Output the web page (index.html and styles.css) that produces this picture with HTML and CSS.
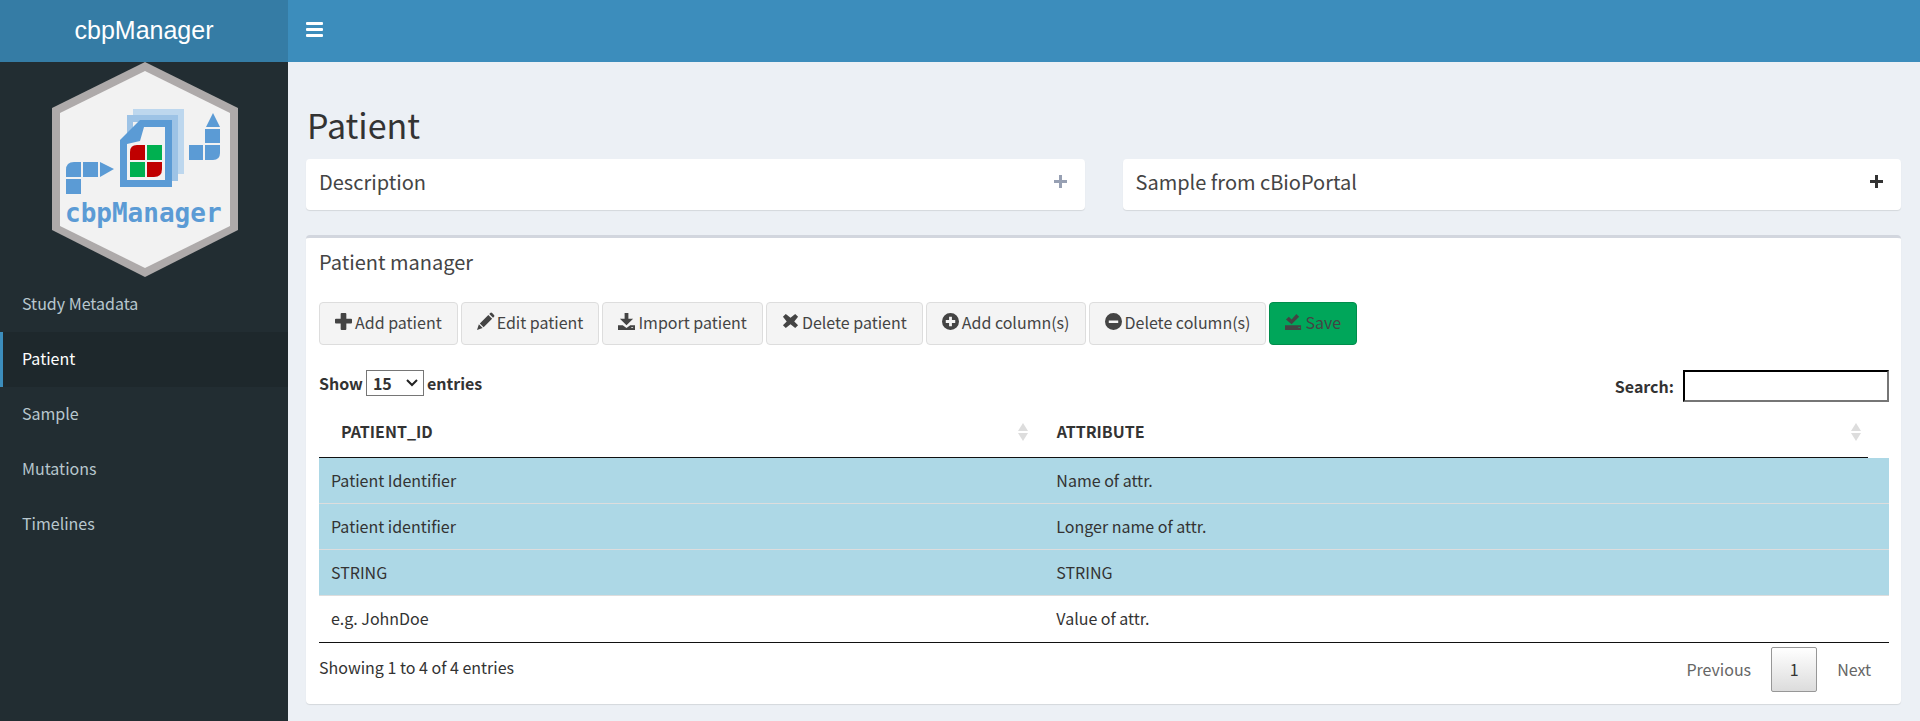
FILE: index.html
```html
<!DOCTYPE html>
<html lang="en">
<head>
<meta charset="utf-8">
<title>cbpManager</title>
<link rel="stylesheet" href="styles.css">
</head>
<body>
<header class="main-header">
  <a class="brand" href="#">cbpManager</a>
  <nav class="navbar">
    <button class="sidebar-toggle" type="button" aria-label="Toggle navigation">
      <svg width="17" height="16" viewBox="0 0 17 16" fill="currentColor"><rect y="0" width="17" height="3" rx="1"/><rect y="6" width="17" height="3" rx="1"/><rect y="12" width="17" height="3" rx="1"/></svg>
    </button>
  </nav>
</header>
<div class="wrapper">
  <aside class="sidebar">
    <svg class="hex-logo" viewBox="52 62 186 215" role="img" aria-label="cbpManager logo">
      <path fill="#aeaaaa" d="M145 62 238 108V230L145 277 52 230V108Z"/>
      <path fill="#f2f2f2" d="M145 71 230 113V226L145 268 60 226V113Z"/>
      <path fill="#bdd7ee" d="M133 109H184V174H133Z"/>
      <path fill="#9dc3e6" d="M127 115H178V181H127Z"/>
      <path fill="#f2f2f2" d="M133 122H139L133 128Z"/>
      <path fill="#5b9bd5" d="M140 120H172V187H120V140Z"/>
      <path fill="#f2f2f2" d="M144 127H165V180H127V144L140 141Z"/>
      <g fill="#c00000"><path d="M145 145V160H130V152Q130 145 137 145Z"/><path d="M147 162H162V169Q162 177 154 177H147Z"/></g>
      <g fill="#00b050"><path d="M147 145H162V160H147Z"/><path d="M130 162H145V177H130Z"/></g>
      <g fill="#5b9bd5">
        <path d="M81 162V177H66V170Q66 162 74 162Z"/><path d="M83 162H98V177H83Z"/><path d="M100 162 114 169 100 177Z"/><path d="M66 179H81V194H66Z"/>
        <path d="M213 113 220 127H206Z"/><path d="M205 129H220V143H205Z"/><path d="M189 145H203V160H189Z"/><path d="M205 145H220V153Q220 160 213 160H205Z"/>
      </g>
      <text class="hex-text" x="65" y="222">cbpManager</text>
    </svg>
    <nav class="menu">
      <a href="#">Study Metadata</a>
      <a href="#" class="active">Patient</a>
      <a href="#">Sample</a>
      <a href="#">Mutations</a>
      <a href="#">Timelines</a>
    </nav>
  </aside>
  <main class="content">
    <h2 class="page-title">Patient</h2>
    <div class="box-row">
      <section class="box collapsed">
        <h3 class="box-title">Description</h3>
        <button class="box-tool" type="button" aria-label="Expand description"><svg width="13" height="13" viewBox="0 0 13 13" fill="currentColor"><path d="M5 0H8V5H13V8H8V13H5V8H0V5H5Z"/></svg></button>
      </section>
      <section class="box collapsed">
        <h3 class="box-title">Sample from cBioPortal</h3>
        <button class="box-tool dark" type="button" aria-label="Expand sample"><svg width="13" height="13" viewBox="0 0 13 13" fill="currentColor"><path d="M5 0H8V5H13V8H8V13H5V8H0V5H5Z"/></svg></button>
      </section>
    </div>
    <section class="box manager">
      <h3 class="box-title">Patient manager</h3>
      <div class="actions">
        <button class="btn" type="button"><svg class="icon" viewBox="0 0 18 18"><path d="M7 0H11Q12 0 12 1V6H17Q18 6 18 7V10Q18 11 17 11H12V17Q12 18 11 18H7Q6 18 6 17V11H1Q0 11 0 10V7Q0 6 1 6H6V1Q6 0 7 0Z"/></svg>Add patient</button>
        <button class="btn" type="button"><svg class="icon" viewBox="0 0 18 18"><path d="M0 18 2 12 6 16ZM3 11 12 2 16 6 7 15ZM13 1 14 0Q15 -1 16 0L18 2Q19 3 18 4L17 5Z"/></svg>Edit patient</button>
        <button class="btn" type="button"><svg class="icon" viewBox="0 0 18 18"><path d="M7 0H11V6H16L9 13 2 6H7ZM0 13H5L9 16 13 13H18V18H0ZM14 15V16H16V15Z" fill-rule="evenodd"/></svg>Import patient</button>
        <button class="btn" type="button"><svg class="icon" viewBox="0 0 18 18"><path d="M4 1 9 5 14 1 17 4 13 9 17 13 14 16 9 12 4 16 1 13 5 9 1 4Z"/></svg>Delete patient</button>
        <button class="btn" type="button"><svg class="icon" viewBox="0 0 18 18"><path fill-rule="evenodd" d="M9 0A9 9 0 0 1 9 18A9 9 0 0 1 9 0ZM7.5 4V7.5H4V10.500H7.500V14H10.500V10.500H14V7.500H10.500V4Z"/></svg>Add column(s)</button>
        <button class="btn" type="button"><svg class="icon" viewBox="0 0 18 18"><path fill-rule="evenodd" d="M9 0A9 9 0 0 1 9 18A9 9 0 0 1 9 0ZM4 8V10.500H14V8Z"/></svg>Delete column(s)</button>
        <button class="btn btn-save" type="button"><svg class="icon" viewBox="0 0 18 18"><path fill-rule="evenodd" d="M1 7 4 4 7 7 12 1 15 4 7 12ZM0 13H17V18H0ZM14 15V16H16V15Z"/></svg>Save</button>
      </div>
      <div class="table-controls">
        <label class="length">Show
          <span class="select-wrap"><select><option>15</option></select><svg width="12" height="8" viewBox="0 0 12 8"><path d="M1 1 6 6 11 1" fill="none" stroke="#222" stroke-width="2"/></svg></span>
          entries</label>
        <label class="search">Search: <input type="search"></label>
      </div>
      <table class="grid grid-head">
        <thead><tr>
          <th scope="col"><div class="th-inner">PATIENT_ID<svg width="10" height="18" viewBox="0 0 10 18"><path d="M5 0 10 8H0ZM0 10H10L5 18Z"/></svg></div></th>
          <th scope="col"><div class="th-inner">ATTRIBUTE<svg width="10" height="18" viewBox="0 0 10 18"><path d="M5 0 10 8H0ZM0 10H10L5 18Z"/></svg></div></th>
        </tr></thead>
      </table>
      <table class="grid grid-body">
        <tbody>
          <tr class="locked"><td>Patient Identifier</td><td>Name of attr.</td></tr>
          <tr class="locked"><td>Patient identifier</td><td>Longer name of attr.</td></tr>
          <tr class="locked"><td>STRING</td><td>STRING</td></tr>
          <tr><td>e.g. JohnDoe</td><td>Value of attr.</td></tr>
        </tbody>
      </table>
      <div class="table-footer">
        <div>Showing 1 to 4 of 4 entries</div>
        <nav class="pages">
          <a href="#" class="page muted">Previous</a>
          <a href="#" class="page current">1</a>
          <a href="#" class="page muted">Next</a>
        </nav>
      </div>
    </section>
  </main>
</div>
</body>
</html>
```
FILE: styles.css
```css
* { box-sizing: border-box; }

body {
  margin: 0;
  min-height: 100vh;
  display: flex;
  flex-direction: column;
  background: #ecf0f5;
  color: #333;
  font-family: "Noto Sans CJK SC", "Noto Sans", sans-serif;
  font-size: 16px;
  line-height: 25px;
}

a { color: inherit; text-decoration: none; }
button, input, select { font: inherit; color: inherit; }

.main-header { display: flex; height: 62px; background: #3c8dbc; color: #fff; }
.brand {
  width: 288px;
  background: #357ca5;
  font-family: "Liberation Sans", Arial, sans-serif;
  font-size: 25px;
  line-height: 60px;
  text-align: center;
}
.navbar { flex: 1; display: flex; }
.sidebar-toggle { display: flex; align-items: center; padding: 0 18px 2px; border: 0; background: none; }

.wrapper { flex: 1; display: flex; }
.sidebar { width: 288px; flex: none; background: #222d32; color: #b8c7ce; }
.hex-logo { display: block; width: 186px; height: 215px; margin-left: 52px; }
.hex-text { font: bold 26px "DejaVu Sans Mono", monospace; fill: #5b9bd5; }
.menu a { display: block; padding: 14px 16px 16px 19px; border-left: 3px solid transparent; }
.menu .active { background: #1e282c; border-left-color: #3c8dbc; color: #fff; }

.content { flex: 1; min-width: 0; padding: 42px 19px 17px 18px; }
.page-title { margin: 0; padding: 0 0 13px 1px; font-size: 34px; font-weight: 400; line-height: 42px; }

.box-row { display: grid; grid-template-columns: 1fr 1fr; gap: 38px; margin-bottom: 25px; }
.box { background: #fff; border-radius: 4px; box-shadow: 0 1px 1px rgba(0, 0, 0, 0.1); }
.box-title { margin: 0; font-size: 20px; font-weight: 400; line-height: 25px; color: #444; }
.collapsed { display: flex; justify-content: space-between; align-items: flex-start; padding: 10px 18px 16px 13px; }
.box-tool { display: flex; padding: 6px 0; border: 0; background: none; color: #97a0b3; }
.box-tool.dark { color: #333; }

.manager { padding: 11px 12px 12px 13px; border-top: 3px solid #d2d6de; }
.actions { display: flex; flex-wrap: wrap; gap: 3px; margin-top: 28px; }
.btn {
  display: flex;
  align-items: center;
  gap: 3px;
  height: 43px;
  padding: 0 15px 2px;
  border: 1px solid #ddd;
  border-radius: 4px;
  background: #f4f4f4;
  color: #444;
}
.icon { width: 17px; height: 17px; margin-bottom: 2px; fill: currentColor; overflow: visible; }
.btn-save { background: #00a65a; border-color: #008d4c; }

.table-controls { display: flex; justify-content: space-between; align-items: flex-start; margin-top: 25px; font-weight: 700; }
.length { display: flex; align-items: center; gap: 3px; }
.select-wrap { display: grid; align-items: center; }
.select-wrap > * { grid-area: 1 / 1; }
.select-wrap svg { justify-self: end; margin-right: 6px; pointer-events: none; }
.length select { appearance: none; width: 58px; height: 26px; padding: 0 6px; border: 1px solid #767676; border-radius: 0; background: #fff; line-height: 24px; }
.search { display: flex; align-items: center; gap: 9px; }
.search input { width: 206px; height: 32px; padding: 1px 2px; border: 2px inset #767676; border-color: #1a1a1a #767676 #767676 #1a1a1a; background: #fff; }

.grid { width: 100%; border-collapse: separate; border-spacing: 0; table-layout: fixed; }
.grid th:first-child, .grid td:first-child { width: 46.2%; }
.grid-head { width: calc(100% - 21px); }
.grid th { padding: 17px 7px 13px 22px; border-bottom: 1px solid #111; text-align: left; }
.th-inner { display: flex; justify-content: space-between; align-items: center; }
.th-inner svg { fill: #ddd; }
.grid td { padding: 10px 12px; border-top: 1px solid #ddd; }
.grid tr:first-child td { border-top: 0; }
.grid tr:last-child td { padding-bottom: 11px; }
.grid-body { border-bottom: 1px solid #111; }
.locked { background: lightblue; }

.table-footer { display: flex; justify-content: space-between; align-items: flex-start; padding-top: 4px; }
.table-footer > div { padding-top: 8px; }
.pages { display: flex; gap: 2px; }
.page { min-width: 46px; padding: 9px 17px; border: 1px solid transparent; border-radius: 2px; text-align: center; }
.muted { color: #666; }
.current { border-color: #979797; background: linear-gradient(#fff, #dcdcdc); }
```
